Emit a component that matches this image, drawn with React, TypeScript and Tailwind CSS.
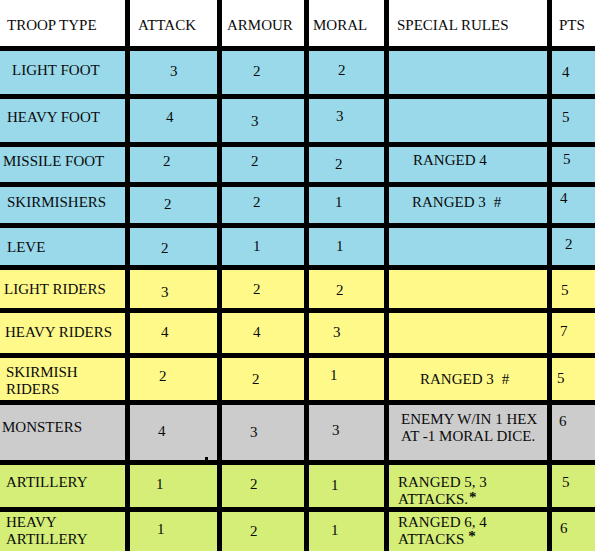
import React from "react";

type Cell = { t?: React.ReactNode; c: string };

const BLUE = "bg-[#99d9ea]";
const YELLOW = "bg-[#fff98a]";
const GREY = "bg-[#cccccc]";
const GREEN = "bg-[#d4ee78]";

const Hash = ({ t, cls }: { t: string; cls: string }) => (
  <span className="whitespace-nowrap">
    {t}
    <span className={cls}>#</span>
  </span>
);

const rows: { bg: string; cells: Cell[] }[] = [
  {
    bg: "bg-white",
    cells: [
      { t: "TROOP TYPE", c: "pl-[7px] pt-[17px]" },
      { t: "ATTACK", c: "pl-[8px] pt-[17px]" },
      { t: "ARMOUR", c: "pl-[5px] pt-[17px]" },
      { t: "MORAL", c: "pl-[4px] pt-[17px]" },
      { t: "SPECIAL RULES", c: "pl-[8px] pt-[17px]" },
      { t: "PTS", c: "pl-[7px] pt-[17px]" },
    ],
  },
  {
    bg: BLUE,
    cells: [
      { t: "LIGHT FOOT", c: "pl-[12px] pt-[11px]" },
      { t: "3", c: "pl-[40px] pt-[12px]" },
      { t: "2", c: "pl-[31px] pt-[12px]" },
      { t: "2", c: "pl-[29px] pt-[11px]" },
      { c: "" },
      { t: "4", c: "pl-[10px] pt-[13px]" },
    ],
  },
  {
    bg: BLUE,
    cells: [
      { t: "HEAVY FOOT", c: "pl-[7px] pt-[10px]" },
      { t: "4", c: "pl-[36px] pt-[10px]" },
      { t: "3", c: "pl-[29px] pt-[14px]" },
      { t: "3", c: "pl-[27px] pt-[9px]" },
      { c: "" },
      { t: "5", c: "pl-[10px] pt-[10px]" },
    ],
  },
  {
    bg: BLUE,
    cells: [
      { t: "MISSILE FOOT", c: "pl-[3px] pt-[6px]" },
      { t: "2", c: "pl-[33px] pt-[6px]" },
      { t: "2", c: "pl-[29px] pt-[6px]" },
      { t: "2", c: "pl-[26px] pt-[9px]" },
      { t: "RANGED 4", c: "pl-[24px] pt-[5px]" },
      { t: "5", c: "pl-[11px] pt-[4px]" },
    ],
  },
  {
    bg: BLUE,
    cells: [
      { t: "SKIRMISHERS", c: "pl-[7px] pt-[7px]" },
      { t: "2", c: "pl-[34px] pt-[9px]" },
      { t: "2", c: "pl-[31px] pt-[7px]" },
      { t: "1", c: "pl-[26px] pt-[7px]" },
      { t: <Hash t="RANGED 3" cls="ml-[8px]" />, c: "pl-[23px] pt-[7px]" },
      { t: "4", c: "pl-[8px] pt-[3px]" },
    ],
  },
  {
    bg: BLUE,
    cells: [
      { t: "LEVE", c: "pl-[7px] pt-[11px]" },
      { t: "2", c: "pl-[31px] pt-[12px]" },
      { t: "1", c: "pl-[31px] pt-[10px]" },
      { t: "1", c: "pl-[27px] pt-[10px]" },
      { c: "" },
      { t: "2", c: "pl-[13px] pt-[8px]" },
    ],
  },
  {
    bg: YELLOW,
    cells: [
      { t: "LIGHT RIDERS", c: "pl-[4px] pt-[11px]" },
      { t: "3", c: "pl-[31px] pt-[14px]" },
      { t: "2", c: "pl-[31px] pt-[11px]" },
      { t: "2", c: "pl-[27px] pt-[12px]" },
      { c: "" },
      { t: "5", c: "pl-[9px] pt-[12px]" },
    ],
  },
  {
    bg: YELLOW,
    cells: [
      { t: "HEAVY RIDERS", c: "pl-[5px] pt-[11px]" },
      { t: "4", c: "pl-[31px] pt-[11px]" },
      { t: "4", c: "pl-[31px] pt-[11px]" },
      { t: "3", c: "pl-[24px] pt-[11px]" },
      { c: "" },
      { t: "7", c: "pl-[8px] pt-[10px]" },
    ],
  },
  {
    bg: YELLOW,
    cells: [
      {
        t: (
          <>
            SKIRMISH
            <br />
            RIDERS
          </>
        ),
        c: "pl-[6px] pt-[6px]",
      },
      { t: "2", c: "pl-[29px] pt-[10px]" },
      { t: "2", c: "pl-[30px] pt-[13px]" },
      { t: "1", c: "pl-[21px] pt-[9px]" },
      { t: <Hash t="RANGED 3" cls="ml-[8px]" />, c: "pl-[31px] pt-[13px]" },
      { t: "5", c: "pl-[5px] pt-[12px]" },
    ],
  },
  {
    bg: GREY,
    cells: [
      { t: "MONSTERS", c: "pl-[2px] pt-[14px]" },
      { t: "4", c: "pl-[28px] pt-[18px]" },
      { t: "3", c: "pl-[28px] pt-[19px]" },
      { t: "3", c: "pl-[23px] pt-[17px]" },
      {
        t: (
          <>
            ENEMY W/IN 1 HEX
            <br />
            AT -1 MORAL DICE.
          </>
        ),
        c: "pl-[12px] pt-[6px] whitespace-nowrap",
      },
      { t: "6", c: "pl-[7px] pt-[8px]" },
    ],
  },
  {
    bg: GREEN,
    cells: [
      { t: "ARTILLERY", c: "pl-[6px] pt-[9px]" },
      { t: "1", c: "pl-[26px] pt-[11px]" },
      { t: "2", c: "pl-[28px] pt-[11px]" },
      { t: "1", c: "pl-[22px] pt-[12px]" },
      {
        t: (
          <>
            RANGED 5, 3
            <br />
            ATTACKS.<span className="ml-[1px] relative -top-[2px] font-bold">*</span>
          </>
        ),
        c: "pl-[9px] pt-[9px] whitespace-nowrap",
      },
      { t: "5", c: "pl-[10px] pt-[9px]" },
    ],
  },
  {
    bg: GREEN,
    cells: [
      {
        t: (
          <>
            HEAVY
            <br />
            ARTILLERY
          </>
        ),
        c: "pl-[6px] pt-[2px]",
      },
      { t: "1", c: "pl-[27px] pt-[9px]" },
      { t: "2", c: "pl-[28px] pt-[11px]" },
      { t: "1", c: "pl-[22px] pt-[10px]" },
      {
        t: (
          <>
            RANGED 6, 4
            <br />
            ATTACKS<span className="ml-[4px] relative -top-[3px] font-bold">*</span>
          </>
        ),
        c: "pl-[9px] pt-[2px] whitespace-nowrap",
      },
      { t: "6", c: "pl-[8px] pt-[8px]" },
    ],
  },
];

export default function App() {
  return (
    <div className="w-[595px] h-[551px] overflow-hidden bg-white">
      <div className="grid grid-cols-[125px_87px_82px_75px_158px_43px] grid-rows-[46px_43px_43px_35px_36px_37px_38px_40px_42px_55px_42px_39px] gap-[5px] bg-black w-[595px] h-[551px] [font-family:'Liberation_Serif','Times_New_Roman',serif] text-[15px] leading-[17px] text-[#0a0a0a]">
        {rows.map((r, ri) =>
          r.cells.map((cell, ci) => (
            <div key={`${ri}-${ci}`} className={`${r.bg} ${cell.c} relative overflow-visible`}>
              {cell.t}
              {ri === 9 && ci === 1 && (
                <span className="absolute right-[9px] bottom-0 w-[3px] h-[3px] bg-black" />
              )}
            </div>
          ))
        )}
      </div>
    </div>
  );
}
